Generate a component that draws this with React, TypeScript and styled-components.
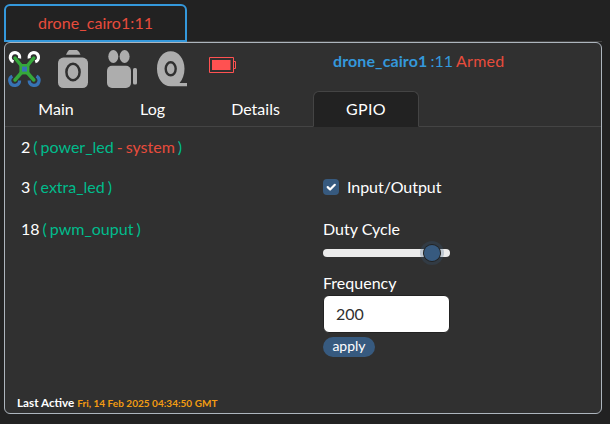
import React from 'react';
import styled, { createGlobalStyle } from 'styled-components';

const GlobalStyle = createGlobalStyle`
  * { box-sizing: border-box; }
  body {
    margin: 0;
    background: #222;
    color: #fff;
    font: 400 16px/24px Lato, sans-serif;
    overflow: hidden;
  }
`;

const Page = styled.div`
  height: 424px;
  padding: 4px 8px 0 4px;
`;

const UnitTabs = styled.div`
  display: flex;
  height: 38px;
  border-bottom: 1px solid #444;
`;

const UnitTab = styled.div`
  width: 183px;
  height: 38px;
  padding: 5px 0 0 32px;
  border: 2px solid #3498db;
  border-radius: 6px 6px 0 0;
  color: #e74c3c;
  letter-spacing: 0.07px;
`;

const Card = styled.section`
  display: flex;
  flex-direction: column;
  height: 372px;
  border: 1px solid #adb5bd;
  border-radius: 6px;
  background: #303030;
`;

const Header = styled.header`
  display: flex;
  height: 48px;
  padding: 7px 0 0 3px;
`;

const Icons = styled.div`
  display: flex;
  width: 325px;
  svg { display: block; flex: none; }
`;

const Title = styled.div`
  height: 24px;
  margin-top: -1px;
  color: #3498db;
  word-spacing: -1px;
  strong { letter-spacing: 0.1px; }
`;

const Armed = styled.span`
  color: #e74c3c;
  letter-spacing: 0.2px;
`;

const Tabs = styled.nav`
  display: flex;
  height: 36px;
  border-bottom: 1px solid #444;
`;

const Tab = styled.div<{ $active?: boolean; $width: number }>`
  width: ${(p) => p.$width}px;
  height: 36px;
  padding-top: 5px;
  text-align: center;
  border: 1px solid ${(p) => (p.$active ? '#444' : 'transparent')};
  border-bottom-color: ${(p) => (p.$active ? '#222' : 'transparent')};
  border-radius: 6px 6px 0 0;
  background: ${(p) => (p.$active ? '#222' : 'transparent')};
  letter-spacing: ${(p) => (p.$active ? '0.35px' : '0')};
`;

const Pins = styled.div`
  display: grid;
  grid-template-columns: 302px 127px;
  grid-template-rows: 40px 42px auto;
  padding: 8px 0 0 16px;
`;

const PinLabel = styled.div`
  height: 24px;
  white-space: pre;
`;

const PinName = styled.span`
  margin-left: 3px;
  color: #00bc8c;
  word-spacing: -1.1px;
`;

const PinRole = styled.span`
  color: #e74c3c;
`;

const Check = styled.label`
  grid-column: 2;
  display: flex;
  height: 24px;
  gap: 8px;
  letter-spacing: -0.05px;
  svg { margin-top: 4px; flex: none; }
`;

const Controls = styled.div`
  display: flex;
  flex-direction: column;
  align-items: flex-start;
`;

const Slider = styled.input`
  appearance: none;
  width: 127px;
  height: 24px;
  margin: 0 0 6px;
  background: transparent;
  &::-webkit-slider-runnable-track {
    height: 8px;
    border-radius: 8px;
    background: #ebebeb;
  }
  &::-webkit-slider-thumb {
    appearance: none;
    width: 16px;
    height: 16px;
    margin-top: -4px;
    border-radius: 50%;
    background: #375a7f;
    box-shadow: 0 0 0 1px #222, 0 0 0 4px rgba(55, 90, 127, 0.25);
  }
`;

const NumberField = styled.input`
  width: 127px;
  height: 38px;
  padding: 5px 12px 7px;
  border: 1px solid #222;
  border-radius: 6px;
  outline: none;
  background: #fff;
  color: #303030;
  font: inherit;
`;

const Apply = styled.button`
  width: 52px;
  height: 20px;
  margin-top: 4px;
  padding: 0 0 2px;
  border: 0;
  border-radius: 10px;
  background: #375a7f;
  color: #fff;
  font: 400 14px/18px Lato, sans-serif;
`;

const Footer = styled.footer`
  margin-top: auto;
  padding: 0 0 1px 12px;
  font-size: 11.7px;
  line-height: 18px;
  font-weight: 700;
`;

const Stamp = styled.span`
  color: #f39c12;
  font-size: 10px;
  letter-spacing: 0.02px;
`;

function DroneIcon() {
  return (
    <svg width="44" height="40" viewBox="0 0 44 40" fill="none">
      <g strokeWidth="3.2">
        <path d="M5.6 11.8A4.7 4.7 0 1 1 11.6 8.3M21.2 8.3A4.7 4.7 0 1 1 27.2 11.8" stroke="#fff" />
        <path d="M4.3 26.2A4.9 4.9 0 1 0 11.6 30.5M21.2 30.5A4.9 4.9 0 1 0 28.5 26.2" stroke="#3773b4" />
      </g>
      <path d="m7 8 7.5 9M25.8 8l-7.5 9M7 30l7.5-8.5M25.8 30l-7.5-8.5" stroke="#35a83a" strokeWidth="3.5" strokeLinecap="round" />
      <path d="M11.4 14h10v10.4h-10z" fill="#35a83a" />
      <path d="M14 16.6h5v5h-5z" fill="#3773b4" />
    </svg>
  );
}

function CameraIcon() {
  return (
    <svg width="50" height="40" viewBox="0 0 50 40" fill="#adadad">
      <path d="M14 4.8Q15 2 17 0h8q3 2 3.5 4.8z" />
      <rect x="6" y="7.6" width="30" height="30.4" rx="5.5" />
      <ellipse cx="21" cy="22" rx="6.6" ry="8.2" fill="none" stroke="#303030" strokeWidth="2.5" />
    </svg>
  );
}

function VideoIcon() {
  return (
    <svg width="49" height="40" viewBox="0 0 49 40" fill="#adadad">
      <ellipse cx="11.3" cy="6.5" rx="5" ry="6.5" />
      <ellipse cx="22.6" cy="6.5" rx="5" ry="6.5" />
      <rect x="5" y="15.7" width="24" height="22.3" rx="5" />
      <rect x="31" y="18" width="4" height="16.5" rx="1.6" />
    </svg>
  );
}

function TapeIcon() {
  return (
    <svg width="56" height="40" viewBox="0 0 56 40" fill="#adadad">
      <path d="M19.7 1.2C12 1.2 6 8.4 6 18.7s6 17.5 13.7 17.5H36v-3.3h-7.5c3-3.2 5-8.3 5-14.2 0-10.3-6.2-17.5-13.8-17.5z" />
      <ellipse cx="19.7" cy="18.8" rx="5" ry="6.5" stroke="#303030" strokeWidth="2.4" />
    </svg>
  );
}

function BatteryIcon() {
  return (
    <svg width="30" height="40" viewBox="0 0 30 40" fill="none" stroke="#ff5151">
      <path d="M2.5 7.5h24v15h-24zM26.5 11.5h2v7h-2" />
      <path d="M5 10h18.5v10H5z" fill="#ff5151" stroke="none" />
    </svg>
  );
}

export default function App() {
  return (
    <Page>
      <GlobalStyle />
      <UnitTabs>
        <UnitTab>drone_cairo1:11</UnitTab>
      </UnitTabs>
      <Card>
        <Header>
          <Icons>
            <DroneIcon />
            <CameraIcon />
            <VideoIcon />
            <TapeIcon />
            <BatteryIcon />
          </Icons>
          <Title>
            <strong>drone_cairo1</strong> :11 <Armed>Armed</Armed>
          </Title>
        </Header>
        <Tabs>
          <Tab $width={102}>Main</Tab>
          <Tab $width={91}>Log</Tab>
          <Tab $width={115}>Details</Tab>
          <Tab $width={106} $active>GPIO</Tab>
        </Tabs>
        <Pins>
          <PinLabel>2<PinName>( power_led <PinRole>- system</PinRole> )</PinName></PinLabel>
          <span />
          <PinLabel>3<PinName>( extra_led )</PinName></PinLabel>
          <Check>
            <svg width="16" height="16" viewBox="0 0 16 16">
              <rect width="16" height="16" rx="4" fill="#375a7f" />
              <path d="m4.7 8.1 2.4 2.4 4.7-4.7" fill="none" stroke="#fff" strokeWidth="2.2" strokeLinecap="round" strokeLinejoin="round" />
            </svg>
            Input/Output
          </Check>
          <PinLabel>18<PinName>( pwm_ouput )</PinName></PinLabel>
          <Controls>
            <span>Duty Cycle</span>
            <Slider type="range" min="0" max="100" defaultValue="91" aria-label="Duty Cycle" />
            <span>Frequency</span>
            <NumberField defaultValue="200" aria-label="Frequency" />
            <Apply>apply</Apply>
          </Controls>
        </Pins>
        <Footer>
          Last Active <Stamp>Fri, 14 Feb 2025 04:34:50 GMT</Stamp>
        </Footer>
      </Card>
    </Page>
  );
}
